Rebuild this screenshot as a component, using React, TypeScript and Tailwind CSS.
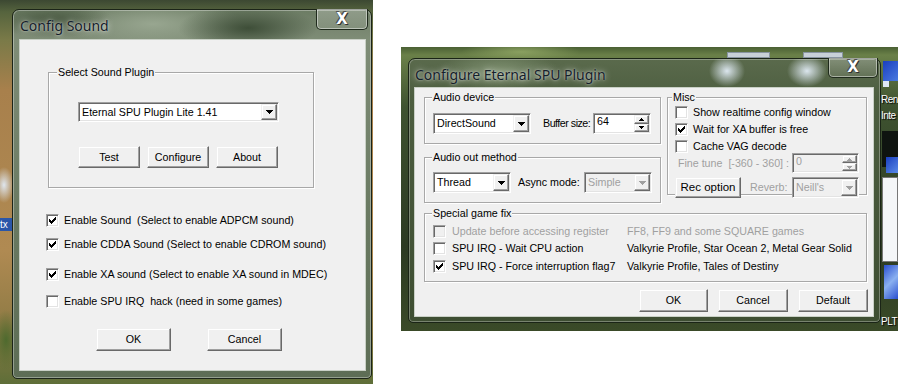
import React from "react";

const F = "font-['Liberation_Sans',Arial,sans-serif]";

const CHECK_PX: [number, number][] = [
  [6, 0], [5, 1], [6, 1], [0, 2], [4, 2], [5, 2], [6, 2], [0, 3], [1, 3], [3, 3], [4, 3], [5, 3],
  [0, 4], [1, 4], [2, 4], [3, 4], [4, 4], [1, 5], [2, 5], [3, 5], [2, 6],
];

function CheckMark({ color = "#000" }: { color?: string }) {
  return (
    <svg width="7" height="7" viewBox="0 0 7 7" className="absolute left-[2px] top-[2px]" shapeRendering="crispEdges">
      {CHECK_PX.map(([x, y], i) => (
        <rect key={i} x={x} y={y} width="1" height="1" fill={color} />
      ))}
    </svg>
  );
}

function Check({ checked = false, disabled = false }: { checked?: boolean; disabled?: boolean }) {
  return (
    <span
      className={`relative block w-[13px] h-[13px] shrink-0 border border-t-[#a0a0a0] border-l-[#a0a0a0] border-r-white border-b-white shadow-[inset_1px_1px_0_#696969,inset_-1px_-1px_0_#e3e3e3] ${
        disabled ? "bg-[#f0f0f0]" : "bg-white"
      }`}
    >
      {checked && <CheckMark color={disabled ? "#a0a0a0" : "#000"} />}
    </span>
  );
}

function Tri({ size = 7, up = false, color = "#000" }: { size?: number; up?: boolean; color?: string }) {
  const rows = Math.ceil(size / 2);
  const rects = [];
  for (let i = 0; i < rows; i++) {
    const y = up ? rows - 1 - i : i;
    rects.push(<rect key={i} x={i} y={y} width={size - 2 * i} height={1} fill={color} />);
  }
  return (
    <svg width={size} height={rows} viewBox={`0 0 ${size} ${rows}`} shapeRendering="crispEdges">
      {rects}
    </svg>
  );
}

const RAISED =
  "bg-[#f0f0f0] border border-t-[#f0f0f0] border-l-[#f0f0f0] border-r-[#696969] border-b-[#696969] shadow-[inset_-1px_-1px_0_#a0a0a0,inset_1px_1px_0_#ffffff]";
const SUNKEN =
  "border border-t-[#a0a0a0] border-l-[#a0a0a0] border-r-white border-b-white shadow-[inset_1px_1px_0_#696969,inset_-1px_-1px_0_#e3e3e3]";

function Btn({ children, className = "" }: { children: React.ReactNode; className?: string }) {
  return <div className={`flex items-center justify-center shrink-0 text-black ${RAISED} ${className}`}>{children}</div>;
}

function Combo({ text, className = "", disabled = false }: { text: string; className?: string; disabled?: boolean }) {
  return (
    <div
      className={`flex items-stretch shrink-0 p-[1px] ${SUNKEN} ${
        disabled ? "bg-[#f0f0f0] text-[#a0a0a0]" : "bg-white text-black"
      } ${className}`}
    >
      <span className="flex-1 flex items-center pl-[2px] whitespace-nowrap overflow-hidden">{text}</span>
      <div className={`w-[16px] flex items-center justify-center ${RAISED}`}>
        <Tri size={7} color={disabled ? "#a0a0a0" : "#000"} />
      </div>
    </div>
  );
}

function Spin({ text, className = "", disabled = false }: { text: string; className?: string; disabled?: boolean }) {
  return (
    <div
      className={`flex items-stretch shrink-0 p-[1px] ${SUNKEN} ${
        disabled ? "bg-[#f0f0f0] text-[#a0a0a0]" : "bg-white text-black"
      } ${className}`}
    >
      <span className="flex-1 pl-[2px] leading-[12px]">{text}</span>
      <div className="w-[15px] flex flex-col">
        <div className={`flex-1 flex items-center justify-center ${RAISED}`}>
          <Tri size={5} up color={disabled ? "#a0a0a0" : "#000"} />
        </div>
        <div className={`flex-1 flex items-center justify-center ${RAISED}`}>
          <Tri size={5} color={disabled ? "#a0a0a0" : "#000"} />
        </div>
      </div>
    </div>
  );
}

function Group({
  label,
  className = "",
  labelClass = "left-[8px]",
  children,
}: {
  label: string;
  className?: string;
  labelClass?: string;
  children?: React.ReactNode;
}) {
  return (
    <div className={`relative shrink-0 border border-[#a8a8a8] shadow-[1px_1px_0_#ffffff,inset_1px_1px_0_#ffffff] ${className}`}>
      <span className={`absolute top-[-8px] ${labelClass} bg-[#f0f0f0] px-[1px] leading-[14px] text-black`}>{label}</span>
      {children}
    </div>
  );
}

function CloseBtn({ className = "" }: { className?: string }) {
  return (
    <div
      className={`absolute flex items-center justify-center rounded-b-[5px] border border-[#1f2a1c] border-t-0 bg-[linear-gradient(180deg,rgba(255,255,255,0.25),rgba(255,255,255,0.08))] shadow-[inset_0_0_0_1px_rgba(255,255,255,0.45)] ${className}`}
    >
      <span className="font-['DejaVu_Sans',sans-serif] font-bold text-[15px] leading-none text-white [text-shadow:0_0_1px_#222,1px_1px_0_#333,-1px_-1px_0_#555]">
        X
      </span>
    </div>
  );
}

const ICON_LABEL =
  "absolute left-[480px] w-[17px] whitespace-nowrap text-white text-[10px] tracking-[-0.5px] leading-[13px] font-['Liberation_Sans',sans-serif] [text-shadow:1px_1px_1px_#000]";

function ConfigSound() {
  return (
    <div className="relative w-[373px] h-[384px] shrink-0 overflow-hidden bg-[radial-gradient(ellipse_10px_18px_at_4px_185px,#dfe6ee,transparent),radial-gradient(ellipse_14px_30px_at_6px_340px,#4e6a2e,transparent),linear-gradient(180deg,#3c4832_0,#56643e_12px,#7a7a48_40px,#a8804c_90px,#b08a52_250px,#8d7a44_330px,#5e6e38_384px)]">
      <div className="absolute left-0 top-[218px] w-[12px] h-[13px] bg-[#2a56a8] text-white text-[10px] leading-[13px] font-['Liberation_Sans',sans-serif]">
        tx
      </div>
      <div className="absolute left-[12px] top-[9px] w-[360px] h-[370px] rounded-t-[7px] rounded-b-[5px] border border-[#1b2418] shadow-[inset_0_0_0_1px_rgba(255,255,255,0.35)] bg-[radial-gradient(ellipse_70px_22px_at_235px_18px,#3e4e38,transparent),radial-gradient(ellipse_60px_18px_at_40px_10px,#4a5a42,transparent),radial-gradient(ellipse_90px_25px_at_140px_14px,#98a690,transparent),linear-gradient(180deg,#6c7c64,#7f8d77_30px,#6a7a62_200px,#5d6d55)] flex flex-col">
        <div className="h-[29px] shrink-0 flex items-center pl-[7px] pt-[2px]">
          <span className="font-['Noto_Sans',sans-serif] text-[14px] text-[#15202a] [text-shadow:0_0_6px_rgba(255,255,255,0.8),0_0_2px_rgba(255,255,255,0.6)]">
            Config Sound
          </span>
        </div>
        <CloseBtn className="right-[3px] top-[-1px] w-[52px] h-[21px]" />
        <div className={`flex-1 ml-[6px] mr-[5px] mb-[7px] border border-[#c9d0c6] bg-[#f0f0f0] ${F} text-[10.7px] text-black flex flex-col`}>
          <Group label="Select Sound Plugin" className="ml-[28px] mt-[32px] w-[266px] h-[116px]" labelClass="left-[8px]">
            <div className="flex flex-col pl-[29px] pt-[29px]">
              <Combo text="Eternal SPU Plugin Lite 1.41" className="w-[201px] h-[20px]" />
              <div className="flex gap-[7px] mt-[24px]">
                <Btn className="w-[62px] h-[22px]">Test</Btn>
                <Btn className="w-[62px] h-[22px]">Configure</Btn>
                <Btn className="w-[62px] h-[22px]">About</Btn>
              </div>
            </div>
          </Group>
          <div className="flex flex-col pl-[26px]">
            <label className="flex items-center gap-[5px] h-[16px] mt-[24px]">
              <Check checked />
              <span className="whitespace-pre">Enable Sound  (Select to enable ADPCM sound)</span>
            </label>
            <label className="flex items-center gap-[5px] h-[16px] mt-[8px]">
              <Check checked />
              <span className="whitespace-pre">Enable CDDA Sound (Select to enable CDROM sound)</span>
            </label>
            <label className="flex items-center gap-[5px] h-[16px] mt-[14px]">
              <Check checked />
              <span className="whitespace-pre">Enable XA sound (Select to enable XA sound in MDEC)</span>
            </label>
            <label className="flex items-center gap-[5px] h-[16px] mt-[11px]">
              <Check />
              <span className="whitespace-pre">Enable SPU IRQ  hack (need in some games)</span>
            </label>
          </div>
          <div className="flex gap-[36px] ml-[76px] mt-[19px]">
            <Btn className="w-[75px] h-[23px]">OK</Btn>
            <Btn className="w-[75px] h-[23px]">Cancel</Btn>
          </div>
        </div>
      </div>
    </div>
  );
}

function ConfigureEternal() {
  return (
    <div className="relative w-[497px] h-[284px] shrink-0 mt-[47px] overflow-hidden bg-[radial-gradient(ellipse_60px_10px_at_120px_5px,#8aa060,transparent),linear-gradient(180deg,#4a6034_0,#6a8048_8px,#3e5230_60px,#2c3a22_200px,#3a4a28_284px)]">
      <div className="absolute left-[326px] top-[5px] w-[43px] h-[6px] bg-[#c8d0d8] border border-[#8894a0]" />
      <div className="absolute left-[402px] top-[5px] w-[40px] h-[6px] bg-[#c8d0d8] border border-[#8894a0]" />
      <div className="absolute left-[482px] top-[14px] w-[15px] h-[20px] bg-[linear-gradient(135deg,#1a3fbf,#4a7ae0)]" />
      <div className="absolute left-[482px] top-[34px] w-[6px] h-[6px] bg-[#dfe8f5]" />
      <div className={`${ICON_LABEL} top-[46px]`}>Ren</div>
      <div className={`${ICON_LABEL} top-[62px]`}>Inte</div>
      <div className="absolute left-[481px] top-[84px] w-[16px] h-[36px] bg-[#0f1410]" />
      <div className="absolute left-[485px] top-[110px] w-[12px] h-[16px] bg-[linear-gradient(135deg,#1a3fbf,#5a8ae8)]" />
      <div className="absolute left-[481px] top-[130px] w-[16px] h-[85px] bg-[#f4f6f8] border border-[#777]" />
      <div className="absolute left-[483px] top-[218px] w-[14px] h-[34px] bg-[linear-gradient(135deg,#2a4fcf,#8ab0f0,#2a4fcf)]" />
      <div className={`${ICON_LABEL} top-[268px]`}>PLT</div>
      <div className="absolute left-[7px] top-[11px] w-[473px] h-[265px] rounded-t-[7px] rounded-b-[5px] border border-[#1a2416] shadow-[inset_0_0_0_1px_rgba(255,255,255,0.3)] bg-[radial-gradient(ellipse_18px_16px_at_318px_12px,#dbe6ee,transparent),radial-gradient(ellipse_20px_16px_at_398px_12px,#dbe6ee,transparent),radial-gradient(ellipse_60px_20px_at_90px_12px,#7e9070,transparent),linear-gradient(180deg,#5a6a4c,#4d5e40_40px,#3e4e32)] flex flex-col">
        <div className="h-[28px] shrink-0 flex items-center pl-[6px] pt-[2px]">
          <span className="font-['Noto_Sans',sans-serif] text-[14px] text-[#15202a] [text-shadow:0_0_6px_rgba(255,255,255,0.85),0_0_2px_rgba(255,255,255,0.6)]">
            Configure Eternal SPU Plugin
          </span>
        </div>
        <CloseBtn className="right-[2px] top-[-1px] w-[50px] h-[20px]" />
        <div className={`flex-1 ml-[5px] mr-[6px] mb-[5px] border border-[#c9d0c6] bg-[#f0f0f0] ${F} text-[10.7px] text-black flex flex-col`}>
          <div className="flex mt-[9px] ml-[9px]">
            <div className="flex flex-col">
              <Group label="Audio device" className="w-[237px] h-[47px]" labelClass="left-[7px]">
                <div className="flex items-center pl-[8px] pr-[9px] pt-[15px]">
                  <Combo text="DirectSound" className="w-[98px] h-[21px]" />
                  <span className="ml-[12px] whitespace-nowrap tracking-[-0.5px]">Buffer size:</span>
                  <Spin text="64" className="ml-auto w-[58px] h-[21px]" />
                </div>
              </Group>
              <Group label="Audio out method" className="w-[237px] h-[46px] mt-[13px]" labelClass="left-[7px]">
                <div className="flex items-center pl-[8px] pr-[8px] pt-[14px]">
                  <Combo text="Thread" className="w-[78px] h-[21px]" />
                  <span className="ml-[7px] whitespace-nowrap">Async mode:</span>
                  <Combo text="Simple" disabled className="ml-auto w-[68px] h-[21px]" />
                </div>
              </Group>
            </div>
            <Group label="Misc" className="ml-[6px] w-[200px] h-[98px]" labelClass="left-[4px]">
              <div className="flex flex-col pt-[6px]">
                <label className="flex items-center gap-[5px] h-[16px] pl-[7px]">
                  <Check />
                  <span className="whitespace-nowrap">Show realtime config window</span>
                </label>
                <label className="flex items-center gap-[5px] h-[16px] mt-[1px] pl-[7px]">
                  <Check checked />
                  <span className="whitespace-nowrap">Wait for XA buffer is free</span>
                </label>
                <label className="flex items-center gap-[5px] h-[16px] mt-[1px] pl-[7px]">
                  <Check />
                  <span className="whitespace-nowrap">Cache VAG decode</span>
                </label>
                <div className="flex items-center justify-end gap-[3px] pr-[7px] mt-[-1px]">
                  <span className="text-[#a0a0a0] whitespace-pre">Fine tune  [-360 - 360] :</span>
                  <Spin text="0" disabled className="w-[67px] h-[20px]" />
                </div>
                <div className="flex items-center pl-[7px] pr-[7px] mt-[4px]">
                  <Btn className="w-[66px] h-[21px] text-[11.5px]">Rec option</Btn>
                  <span className="ml-[9px] text-[#a0a0a0]">Reverb:</span>
                  <Combo text="Neill's" disabled className="ml-auto w-[67px] h-[21px]" />
                </div>
              </div>
            </Group>
          </div>
          <Group label="Special game fix" className="ml-[9px] mt-[10px] w-[443px] h-[69px]" labelClass="left-[7px]">
            <div className="flex flex-col pt-[9px] pl-[8px]">
              <div className="grid grid-cols-[194px_1fr] items-center h-[17px] text-[#a0a0a0]">
                <label className="flex items-center gap-[6px]">
                  <Check disabled />
                  <span className="whitespace-nowrap">Update before accessing register</span>
                </label>
                <span className="whitespace-nowrap">FF8, FF9 and some SQUARE games</span>
              </div>
              <div className="grid grid-cols-[194px_1fr] items-center h-[17px]">
                <label className="flex items-center gap-[6px]">
                  <Check />
                  <span className="whitespace-nowrap">SPU IRQ - Wait CPU action</span>
                </label>
                <span className="whitespace-nowrap">Valkyrie Profile, Star Ocean 2, Metal Gear Solid</span>
              </div>
              <div className="grid grid-cols-[194px_1fr] items-center h-[17px] mt-[1px]">
                <label className="flex items-center gap-[6px]">
                  <Check checked />
                  <span className="whitespace-nowrap">SPU IRQ - Force interruption flag7</span>
                </label>
                <span className="whitespace-nowrap">Valkyrie Profile, Tales of Destiny</span>
              </div>
            </div>
          </Group>
          <div className="flex justify-end gap-[10px] pr-[5px] mt-[7px]">
            <Btn className="w-[69px] h-[23px]">OK</Btn>
            <Btn className="w-[70px] h-[23px]">Cancel</Btn>
            <Btn className="w-[70px] h-[23px]">Default</Btn>
          </div>
        </div>
      </div>
    </div>
  );
}

export default function App() {
  return (
    <div className="w-[904px] h-[384px] bg-white flex items-start overflow-hidden">
      <ConfigSound />
      <div className="w-[28px] shrink-0" />
      <ConfigureEternal />
    </div>
  );
}
